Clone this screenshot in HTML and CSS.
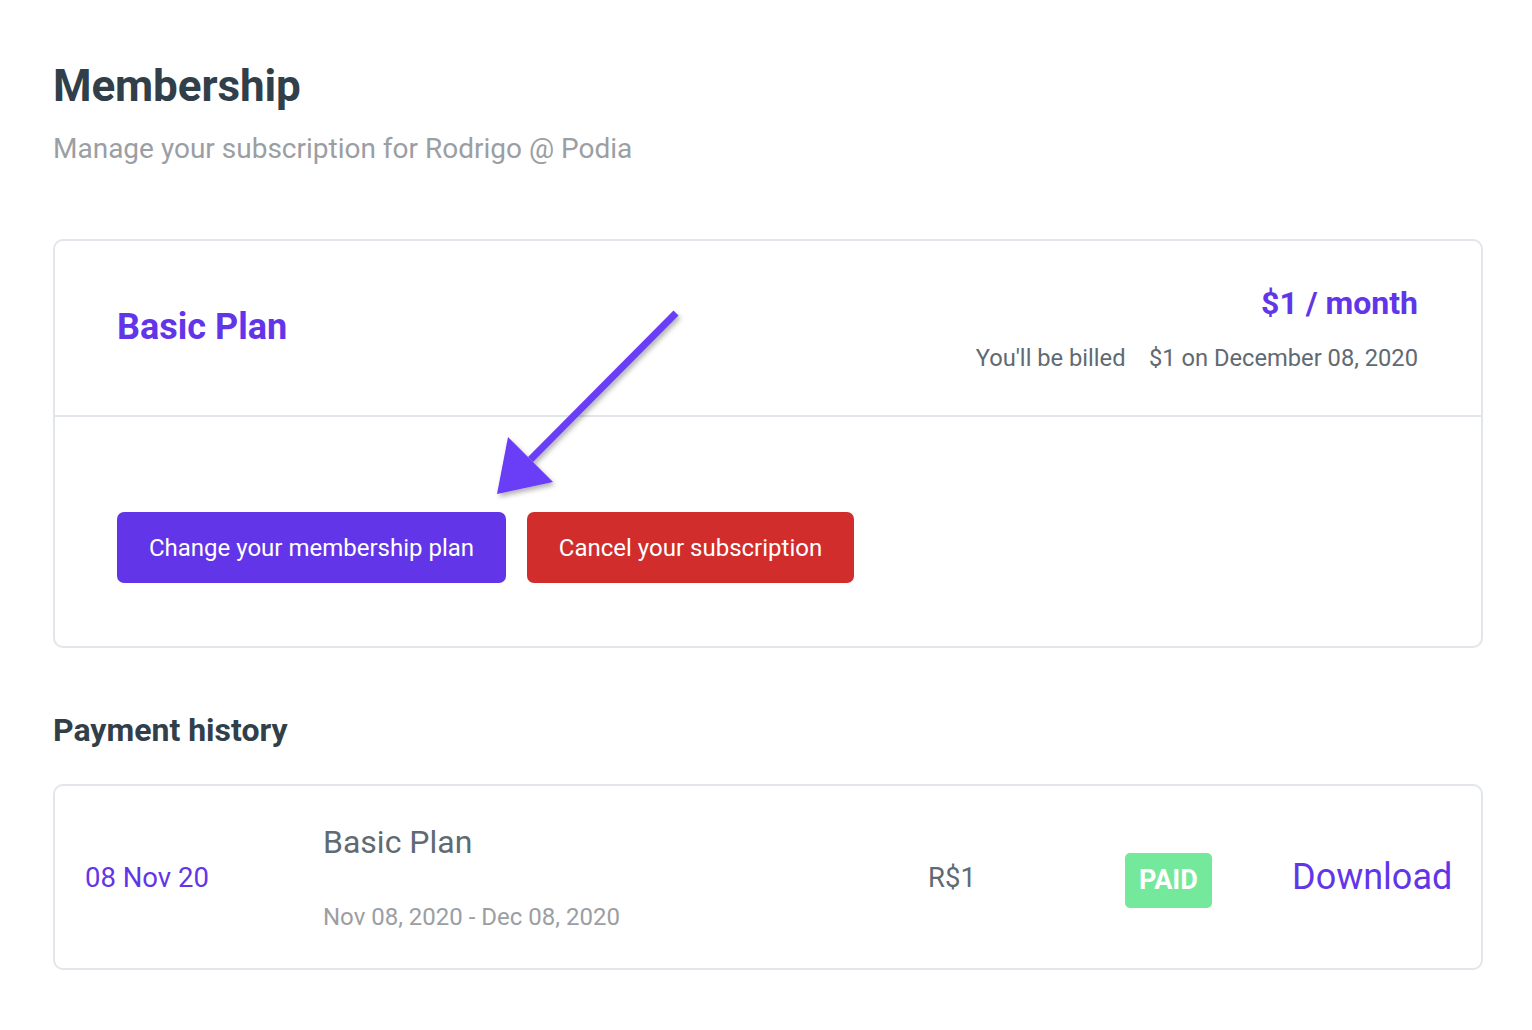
FILE: index.html
```html
<!DOCTYPE html>
<html>
<head>
<meta charset="utf-8">
<link rel="stylesheet" href="styles.css">
</head>
<body>
<div class="page">
  <h1 class="title">Membership</h1>
  <p class="subtitle">Manage your subscription for Rodrigo @ Podia</p>

  <section class="card plan-card">
    <div class="plan-head">
      <h2 class="plan-name">Basic Plan</h2>
      <div class="plan-price">
        <div class="price">$1 / month</div>
        <div class="billed">You'll be billed&nbsp;&nbsp;&nbsp; $1 on December 08, 2020</div>
      </div>
    </div>
    <div class="plan-actions">
      <button class="btn btn-primary">Change your membership plan</button>
      <button class="btn btn-danger">Cancel your subscription</button>
    </div>
    <svg class="arrow" width="220" height="220" viewBox="0 0 220 220">
      <defs>
        <filter id="sh" x="-20%" y="-20%" width="140%" height="140%">
          <feDropShadow dx="2" dy="3" stdDeviation="2.5" flood-color="#000" flood-opacity="0.3"/>
        </filter>
      </defs>
      <g filter="url(#sh)" fill="#6a3cf6" stroke="none">
        <polygon points="186.5,9.5 191.5,14.5 46,161 41,156"/>
        <polygon points="10,193 21,136 66,181"/>
      </g>
    </svg>
  </section>

  <h3 class="section-title">Payment history</h3>

  <section class="card history-card">
    <div class="pay-row">
      <div class="pay-date">08 Nov 20</div>
      <div class="pay-plan">
        <div class="pay-plan-name">Basic Plan</div>
        <div class="pay-period">Nov 08, 2020 - Dec 08, 2020</div>
      </div>
      <div class="pay-amount">R$1</div>
      <div class="pay-status"><span class="badge">PAID</span></div>
      <a class="pay-download" href="#">Download</a>
    </div>
  </section>
</div>
</body>
</html>
```

FILE: styles.css
```css
* { box-sizing: border-box; }
html, body { margin: 0; padding: 0; background: #fff; }
body {
  font-family: Roboto, "Liberation Sans", Arial, sans-serif;
  color: #313f4a;
}
.page {
  padding: 60px 49px 0 53px;
}
.title {
  margin: 0;
  font-size: 44px;
  line-height: 52px;
  font-weight: 700;
  color: #313f4a;
  letter-spacing: -0.1px;
}
.subtitle {
  margin: 20px 0 0;
  font-size: 28px;
  line-height: 34px;
  color: #9b9ea3;
}
.card {
  border: 2px solid #e2e6ea;
  border-radius: 10px;
  background: #fff;
}
.plan-card {
  position: relative;
  margin-top: 73px;
}
.plan-head {
  display: flex;
  justify-content: space-between;
  align-items: flex-start;
  padding: 40px 63px 41px 62px;
  border-bottom: 2px solid #e2e6ea;
}
.plan-name {
  margin: 24px 0 0;
  font-size: 36px;
  line-height: 44px;
  font-weight: 700;
  color: #6236e8;
}
.plan-price {
  text-align: right;
}
.price {
  font-size: 32px;
  line-height: 44px;
  font-weight: 700;
  color: #6236e8;
}
.billed {
  margin-top: 17px;
  font-size: 23.7px;
  line-height: 32px;
  color: #5f6a72;
}
.plan-actions {
  display: flex;
  gap: 21px;
  padding: 95px 62px 63px;
}
.btn {
  font-family: inherit;
  font-size: 24px;
  color: #fff;
  border: 0;
  border-radius: 7px;
  height: 71px;
  padding: 0;
  cursor: pointer;
}
.btn-primary {
  background: #6236e8;
  width: 389px;
}
.btn-danger {
  background: #d12d2c;
  width: 327px;
}
.arrow {
  position: absolute;
  left: 432px;
  top: 60px;
  overflow: visible;
}
.section-title {
  margin: 62px 0 0;
  font-size: 32px;
  line-height: 40px;
  font-weight: 700;
  color: #313f4a;
}
.history-card {
  margin-top: 34px;
}
.pay-row {
  display: grid;
  grid-template-columns: 238px 605px 197px 167px 1fr;
  align-items: center;
  padding: 36px 30px 36px 30px;
}
.pay-date {
  font-size: 27.5px;
  color: #6236e8;
}
.pay-plan-name {
  font-size: 32px;
  line-height: 40px;
  color: #5f6a72;
}
.pay-period {
  margin-top: 40px;
  font-size: 24px;
  line-height: 30px;
  color: #9b9ea3;
}
.pay-amount {
  font-size: 27.5px;
  color: #5f6a72;
}
.badge {
  display: inline-block;
  margin-top: 7px;
  background: #74e99b;
  color: #fff;
  font-weight: 700;
  font-size: 27px;
  line-height: 55px;
  height: 55px;
  padding: 0 14px;
  border-radius: 5px;
}
.pay-download {
  font-size: 36px;
  color: #6236e8;
  text-decoration: none;
}
```
